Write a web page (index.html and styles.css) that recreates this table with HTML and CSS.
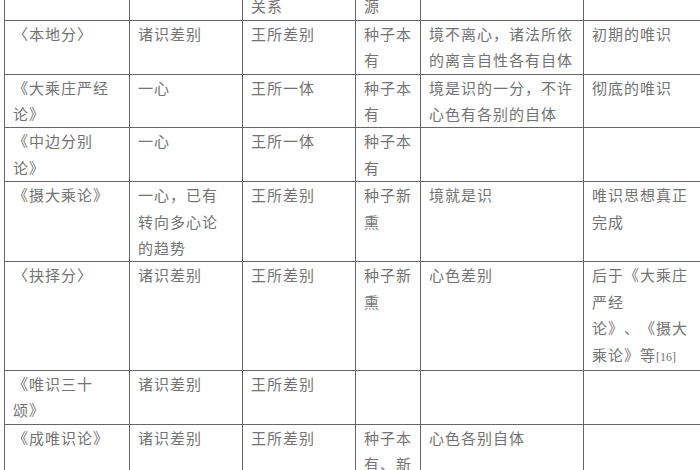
FILE: index.html
```html
<!DOCTYPE html>
<html lang="zh-CN">
<head>
<meta charset="utf-8">
<title>唯识思想发展表</title>
<link rel="stylesheet" href="styles.css">
</head>
<body>
<table class="grid">
  <colgroup>
    <col class="c1"><col class="c2"><col class="c3"><col class="c4"><col class="c5"><col class="c6">
  </colgroup>
  <tr class="head">
    <td></td><td></td><td>关系</td><td>源</td><td></td><td></td>
  </tr>
  <tr>
    <td>〈本地分〉</td><td>诸识差别</td><td>王所差别</td><td>种子本<br>有</td><td>境不离心，诸法所依<br>的离言自性各有自体</td><td>初期的唯识</td>
  </tr>
  <tr>
    <td>《大乘庄严经<br>论》</td><td>一心</td><td>王所一体</td><td>种子本<br>有</td><td>境是识的一分，不许<br>心色有各别的自体</td><td>彻底的唯识</td>
  </tr>
  <tr>
    <td>《中边分别<br>论》</td><td>一心</td><td>王所一体</td><td>种子本<br>有</td><td></td><td></td>
  </tr>
  <tr>
    <td>《摄大乘论》</td><td>一心，已有<br>转向多心论<br>的趋势</td><td>王所差别</td><td>种子新<br>熏</td><td>境就是识</td><td>唯识思想真正<br>完成</td>
  </tr>
  <tr>
    <td>〈抉择分〉</td><td>诸识差别</td><td>王所差别</td><td>种子新<br>熏</td><td>心色差别</td><td>后于《大乘庄<br>严经<br>论》、《摄大<br>乘论》等<span class="ref">[16]</span></td>
  </tr>
  <tr>
    <td>《唯识三十<br>颂》</td><td>诸识差别</td><td>王所差别</td><td></td><td></td><td></td>
  </tr>
  <tr>
    <td>《成唯识论》</td><td>诸识差别</td><td>王所差别</td><td>种子本<br>有、新<br>熏</td><td>心色各别自体</td><td></td>
  </tr>
</table>
</body>
</html>
```

FILE: styles.css
```css
html, body {
  margin: 0;
  padding: 0;
  background: #ffffff;
  overflow: hidden;
}

.grid {
  border-collapse: collapse;
  table-layout: fixed;
  width: 698px;
  margin: -34px 0 0 4px;
  font-family: "Noto Sans CJK SC", "Noto Sans", sans-serif;
  font-size: 15px;
  letter-spacing: 1px;
  color: #737373;
  text-spacing-trim: space-all;
  font-kerning: none;
}

.c1 { width: 125px; }
.c2 { width: 113px; }
.c3 { width: 113px; }
.c4 { width: 65px; }
.c5 { width: 163px; }
.c6 { width: 119px; }

.grid td {
  border: 1px solid #666666;
  vertical-align: top;
  padding: 0 4px 0 8px;
  line-height: 26.4px;
  white-space: nowrap;
}

.grid .head td {
  padding-top: 26.4px;
}

.ref {
  font-family: "Liberation Serif", serif;
  font-size: 12px;
  letter-spacing: 0;
}
```
